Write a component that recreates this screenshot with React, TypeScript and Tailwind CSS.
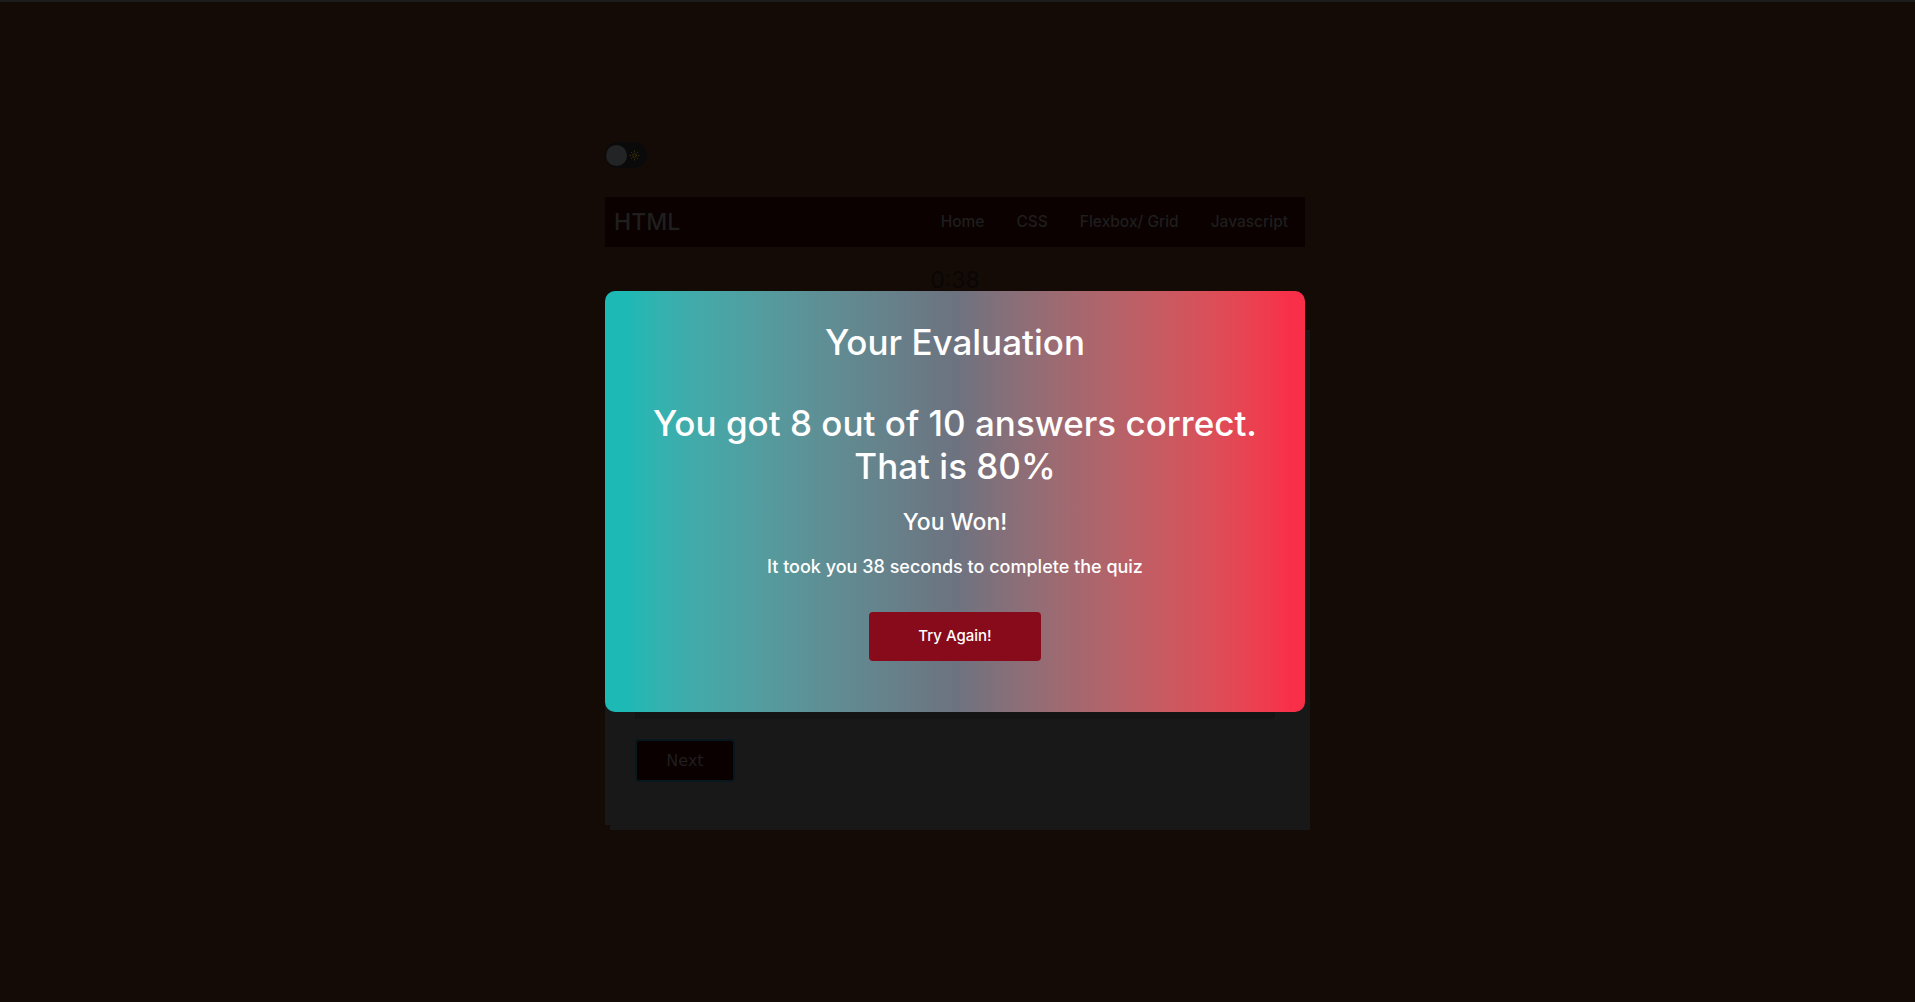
import { Sun } from "lucide-react";

const navLinks = ["Home", "CSS", "Flexbox/ Grid", "Javascript"];

function ThemeToggle() {
  return (
    <div className="flex h-[26px] w-[42px] items-center rounded-full bg-[#0b0a0a] pl-[1px]">
      <span className="size-[21px] rounded-full bg-[#232426]" />
      <Sun className="ml-[2px] text-[#3a2f05]" size={11} strokeWidth={2} />
    </div>
  );
}

function ResultModal() {
  return (
    <div className="absolute left-0 top-[289px] z-10 flex w-full flex-col items-center rounded-[10px] bg-gradient-to-r from-[#1cb9b5] from-[3%] via-[#6c7380] via-50% to-[#f92e48] to-[98%] pb-[51px] pt-[31px] text-center text-white">
      <h2 className="text-[35px] font-medium leading-[40px]">Your Evaluation</h2>
      <p className="mt-[40px] text-[35px] font-medium leading-[43px]">
        You got 8 out of 10 answers correct.
        <br />
        That is 80%
      </p>
      <h3 className="mt-[18px] text-[23px] font-medium leading-[32px]">You Won!</h3>
      <p className="mt-[16px] text-[18px] font-medium leading-[26px]">It took you 38 seconds to complete the quiz</p>
      <button className="mt-[32px] h-[49px] w-[172px] rounded-[4px] bg-[#870b1b] text-[15px] font-medium text-white">
        Try Again!
      </button>
    </div>
  );
}

export default function App() {
  return (
    <div className="min-h-screen border-t-2 border-[#1d1d1d] bg-[#140b07] pr-[5px] font-['Inter',sans-serif]">
      <div className="relative mx-auto w-[700px] pt-[140px] pb-[160px]">
        <ThemeToggle />

        <nav className="mt-[29px] flex h-[50px] items-center justify-between bg-[#0b0101] pl-[9px] pr-[17px]">
          <span className="text-[23px] font-medium text-[#1f1f1f]">HTML</span>
          <ul className="flex gap-[32px] text-[15.5px] font-medium text-[#1e1e1e]">
            {navLinks.map((l) => (
              <li key={l}>{l}</li>
            ))}
          </ul>
        </nav>

        <div className="mt-[17px] text-center text-[23px] leading-[32px] text-[#0a0606]">0:38</div>

        <ResultModal />

        <div className="mt-[29px] flex h-[500px] flex-col bg-[#181818] px-[30px] pt-[30px] shadow-[5px_5px_0_#181818]">
          <div className="h-[364px] bg-[#141414]" />
          <button className="mt-[20px] h-[43px] w-[100px] rounded-[4px] border-2 border-[#08171d] bg-[#0a0000] font-['DejaVu_Sans',sans-serif] text-[16px] text-[#1e1e1e]">
            Next
          </button>
        </div>
      </div>
    </div>
  );
}
